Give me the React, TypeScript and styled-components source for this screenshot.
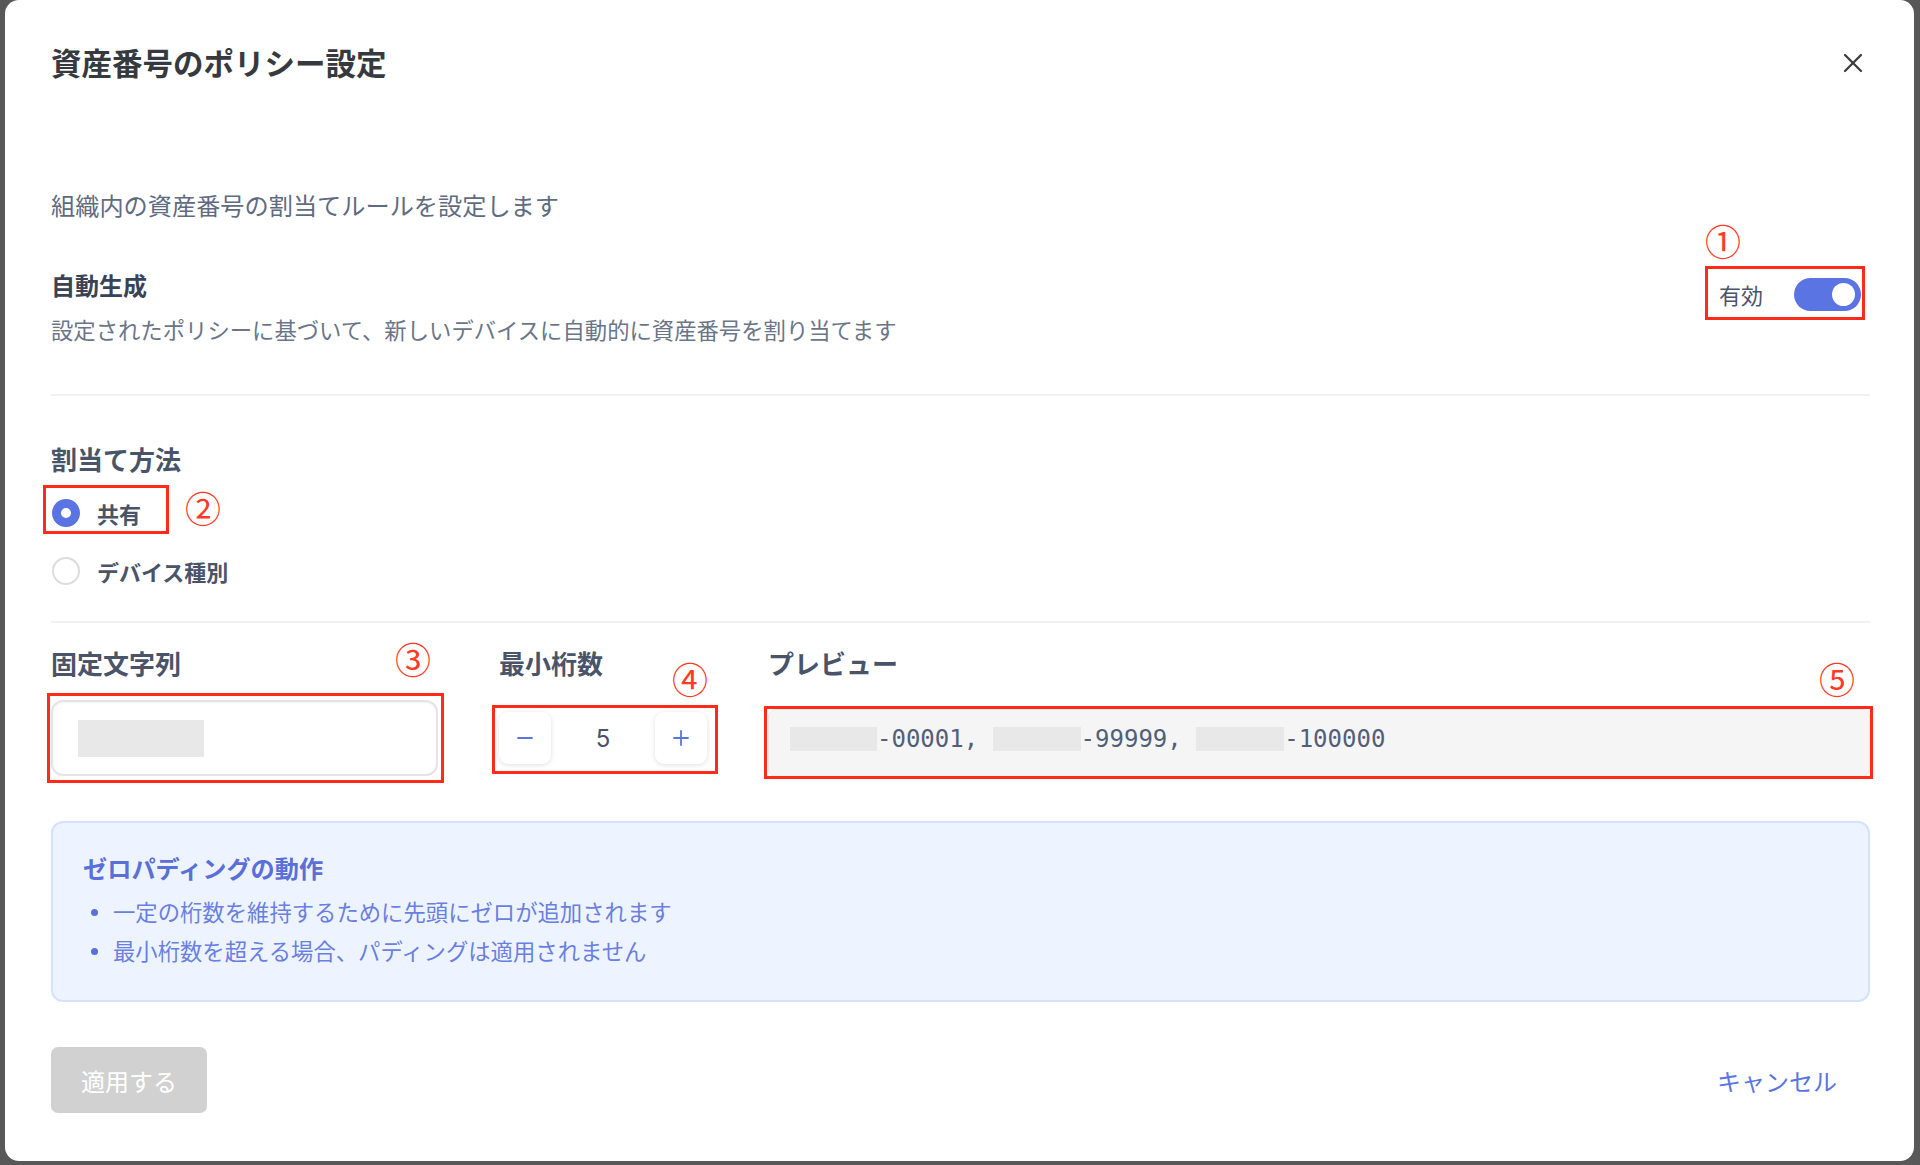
import React, { useState } from 'react'
import styled, { createGlobalStyle } from 'styled-components'
import { X, Minus, Plus } from 'lucide-react'

const GlobalStyle = createGlobalStyle`
  html, body {
    margin: 0;
    padding: 0;
    background: #585858;
  }
  body {
    font-family: "Noto Sans CJK JP", "Noto Sans", sans-serif;
  }
  #root {
    padding: 0 6px 4px 5px;
  }
`

const Modal = styled.div`
  background: #fff;
  border-radius: 14px;
  padding: 42px 44px 46px 46px;
  box-sizing: border-box;
  min-height: 1161px;
`

const Header = styled.div`
  display: flex;
  justify-content: space-between;
  align-items: center;
  height: 40px;
`

const Title = styled.h2`
  margin: 0;
  font-size: 30.5px;
  line-height: 40px;
  font-weight: 700;
  color: #363a40;
`

const CloseButton = styled.button`
  width: 44px;
  height: 44px;
  margin: 2px -5px 0 0;
  padding: 0;
  border: none;
  background: none;
  color: #3c3c3c;
  display: flex;
  align-items: center;
  justify-content: center;
  cursor: pointer;
`

const Description = styled.p`
  margin: 105px 0 0;
  font-size: 24.2px;
  line-height: 36px;
  color: #5f6b80;
`

const SettingRow = styled.div`
  margin-top: 45px;
  display: flex;
  justify-content: space-between;
  align-items: flex-start;
`

const SettingTitle = styled.div`
  font-size: 24px;
  line-height: 34px;
  font-weight: 700;
  color: #3a4356;
`

const SettingHint = styled.div`
  margin-top: 11px;
  font-size: 22.35px;
  line-height: 32px;
  color: #6b7588;
`

const ToggleSlot = styled.div`
  margin: 9px 9px 0 0;
`

const ToggleGroup = styled.label`
  display: flex;
  align-items: center;
  gap: 31px;
  height: 34px;
  font-size: 22px;
  color: #4a5468;
  cursor: pointer;
`

const Track = styled.span<{ $on: boolean }>`
  position: relative;
  width: 67px;
  height: 33px;
  border-radius: 17px;
  background: ${p => (p.$on ? '#5b74e3' : '#cfd3da')};
`

const Knob = styled.span<{ $on: boolean }>`
  position: absolute;
  top: 5px;
  left: ${p => (p.$on ? '38px' : '5px')};
  width: 23px;
  height: 23px;
  border-radius: 50%;
  background: #fff;
`

const Divider = styled.hr<{ $gap: number }>`
  margin: ${p => p.$gap}px 0 0;
  border: none;
  height: 2px;
  background: #f1f1f1;
`

const SectionTitle = styled.div<{ $gap: number }>`
  margin-top: ${p => p.$gap}px;
  font-size: 26px;
  line-height: 34px;
  font-weight: 700;
  color: #4a5468;
`

const RadioList = styled.div`
  margin-top: 17px;
  display: flex;
  flex-direction: column;
  align-items: flex-start;
  gap: 18px;
`

const RadioRow = styled.label`
  display: inline-flex;
  align-items: center;
  gap: 17px;
  height: 40px;
  padding-left: 1px;
  font-size: 22px;
  font-weight: 700;
  color: #4a5468;
  cursor: pointer;
`

const RadioDot = styled.span<{ $checked: boolean }>`
  box-sizing: border-box;
  width: 28px;
  height: 28px;
  border-radius: 50%;
  background: #fff;
  border: ${p => (p.$checked ? '9px solid #5b74e3' : '2px solid #dcdcdc')};
`

const FieldGrid = styled.div`
  margin-top: 23px;
  display: grid;
  grid-template-columns: 387px 208px 1fr;
  column-gap: 61px;
`

const FieldLabel = styled.div`
  font-size: 26px;
  line-height: 34px;
  font-weight: 700;
  color: #4a5468;
`

const Control = styled.div<{ $gap: number }>`
  margin-top: ${p => p.$gap}px;
`

const TextInput = styled.div`
  box-sizing: border-box;
  height: 76px;
  border: 2px solid #e4e4e4;
  border-radius: 12px;
  box-shadow: inset 0 1px 2px rgba(0, 0, 0, 0.05);
  display: flex;
  align-items: center;
  padding-left: 25px;
`

const Redacted = styled.span<{ $w: number; $h: number }>`
  display: inline-block;
  width: ${p => p.$w}px;
  height: ${p => p.$h}px;
  background: #e8e8e8;
  vertical-align: middle;
`

const Stepper = styled.div`
  height: 76px;
  display: flex;
  align-items: center;
  justify-content: space-between;
`

const StepButton = styled.button`
  width: 52px;
  height: 52px;
  padding: 0;
  border: none;
  border-radius: 9px;
  background: #fff;
  box-shadow: 0 1px 5px rgba(0, 0, 0, 0.13);
  color: #5b74e3;
  display: flex;
  align-items: center;
  justify-content: center;
  cursor: pointer;
`

const StepValue = styled.span`
  font-family: "Inter", "Noto Sans", sans-serif;
  font-size: 24px;
  color: #4a5468;
`

const Preview = styled.div`
  box-sizing: border-box;
  height: 68px;
  border: 1px solid #ececec;
  border-radius: 8px;
  background: #f5f5f5;
  display: flex;
  align-items: center;
  padding: 0 0 8px 21px;
  font-family: "DejaVu Sans Mono", "Liberation Mono", monospace;
  font-size: 24px;
  color: #535f7a;
  white-space: pre;
`

const InfoBox = styled.div`
  margin-top: 44px;
  box-sizing: border-box;
  height: 181px;
  border: 2px solid #d3e3fc;
  border-radius: 12px;
  background: #eef4ff;
  padding: 28px 30px 28px;
`

const InfoTitle = styled.div`
  font-size: 24.2px;
  line-height: 34px;
  font-weight: 700;
  color: #5b6fd9;
`

const InfoList = styled.ul`
  margin: 7px 0 0;
  padding: 0;
  list-style: none;
`

const InfoItem = styled.li`
  position: relative;
  padding-left: 30px;
  font-size: 22.35px;
  line-height: 39px;
  color: #6a7fe2;

  &::before {
    content: '';
    position: absolute;
    left: 8px;
    top: 17px;
    width: 7px;
    height: 7px;
    border-radius: 50%;
    background: #5b6fd9;
  }
`

const Footer = styled.div`
  margin-top: 45px;
  display: flex;
  justify-content: space-between;
  align-items: center;
`

const ApplyButton = styled.button`
  width: 156px;
  height: 66px;
  border: none;
  border-radius: 7px;
  background: #d1d1d1;
  color: #fff;
  font-family: inherit;
  font-size: 24px;
`

const CancelButton = styled.button`
  height: 66px;
  padding: 0 33px 0 20px;
  border: none;
  background: none;
  color: #5b74e3;
  font-family: inherit;
  font-size: 24px;
  cursor: pointer;
`

/* red review annotations drawn over the form */
const Annotated = styled.div<{ $inline?: boolean }>`
  position: relative;
  display: ${p => (p.$inline ? 'inline-block' : 'block')};
`

const RedFrame = styled.span<{ $t: number; $r: number; $b: number; $l: number }>`
  position: absolute;
  top: ${p => p.$t}px;
  right: ${p => p.$r}px;
  bottom: ${p => p.$b}px;
  left: ${p => p.$l}px;
  border: 3px solid #ff2a17;
  pointer-events: none;
`

const Marker = styled.span<{ $x: number; $y: number }>`
  position: absolute;
  left: ${p => p.$x}px;
  top: ${p => p.$y}px;
  transform: translate(-50%, -50%);
  font-family: "Noto Sans CJK JP", sans-serif;
  font-size: 36px;
  font-weight: 400;
  line-height: 1;
  color: #ff3a26;
  text-shadow: 0 0 3px #fff;
  pointer-events: none;
`

type Frame = { t: number; r: number; b: number; l: number }

const Note: React.FC<{
  frame: Frame
  mark: string
  x: number
  y: number
  inline?: boolean
  children: React.ReactNode
}> = ({ frame, mark, x, y, inline, children }) => (
  <Annotated $inline={inline}>
    {children}
    <RedFrame $t={frame.t} $r={frame.r} $b={frame.b} $l={frame.l} />
    <Marker $x={x} $y={y}>{mark}</Marker>
  </Annotated>
)

export default function App() {
  const [enabled, setEnabled] = useState(true)
  const [method, setMethod] = useState<'shared' | 'type'>('shared')
  const [digits, setDigits] = useState(5)

  return (
    <>
      <GlobalStyle />
      <Modal>
        <Header>
          <Title>資産番号のポリシー設定</Title>
          <CloseButton aria-label="close">
            <X size={32} strokeWidth={1.7} />
          </CloseButton>
        </Header>

        <Description>組織内の資産番号の割当てルールを設定します</Description>

        <SettingRow>
          <div>
            <SettingTitle>自動生成</SettingTitle>
            <SettingHint>設定されたポリシーに基づいて、新しいデバイスに自動的に資産番号を割り当てます</SettingHint>
          </div>
          <ToggleSlot>
            <Note frame={{ t: -11, r: -4, b: -9, l: -14 }} mark="①" x={4} y={-37}>
              <ToggleGroup onClick={() => setEnabled(!enabled)}>
                有効
                <Track $on={enabled}>
                  <Knob $on={enabled} />
                </Track>
              </ToggleGroup>
            </Note>
          </ToggleSlot>
        </SettingRow>

        <Divider $gap={49} />

        <SectionTitle $gap={46}>割当て方法</SectionTitle>
        <RadioList>
          <Note frame={{ t: -8, r: -28, b: -1, l: -8 }} mark="②" x={152} y={14} inline>
            <RadioRow onClick={() => setMethod('shared')}>
              <RadioDot $checked={method === 'shared'} />
              共有
            </RadioRow>
          </Note>
          <RadioRow onClick={() => setMethod('type')}>
            <RadioDot $checked={method === 'type'} />
            デバイス種別
          </RadioRow>
        </RadioList>

        <Divider $gap={30} />

        <FieldGrid>
          <div>
            <FieldLabel>固定文字列</FieldLabel>
            <Control $gap={20}>
              <Note frame={{ t: -7, r: -6, b: -7, l: -4 }} mark="③" x={362} y={-42}>
                <TextInput>
                  <Redacted $w={126} $h={37} />
                </TextInput>
              </Note>
            </Control>
          </div>
          <div>
            <FieldLabel>最小桁数</FieldLabel>
            <Control $gap={20}>
              <Note frame={{ t: 5, r: -11, b: 2, l: -7 }} mark="④" x={191} y={-22}>
                <Stepper>
                  <StepButton onClick={() => setDigits(Math.max(1, digits - 1))}>
                    <Minus size={24} strokeWidth={1.8} />
                  </StepButton>
                  <StepValue>{digits}</StepValue>
                  <StepButton onClick={() => setDigits(digits + 1)}>
                    <Plus size={24} strokeWidth={1.8} />
                  </StepButton>
                </Stepper>
              </Note>
            </Control>
          </div>
          <div>
            <FieldLabel>プレビュー</FieldLabel>
            <Control $gap={29}>
              <Note frame={{ t: -3, r: -3, b: -2, l: -4 }} mark="⑤" x={1069} y={-31}>
                <Preview>
                  <Redacted $w={87} $h={24} />
                  {'-00001, '}
                  <Redacted $w={88} $h={24} />
                  {'-99999, '}
                  <Redacted $w={88} $h={24} />
                  {'-100000'}
                </Preview>
              </Note>
            </Control>
          </div>
        </FieldGrid>

        <InfoBox>
          <InfoTitle>ゼロパディングの動作</InfoTitle>
          <InfoList>
            <InfoItem>一定の桁数を維持するために先頭にゼロが追加されます</InfoItem>
            <InfoItem>最小桁数を超える場合、パディングは適用されません</InfoItem>
          </InfoList>
        </InfoBox>

        <Footer>
          <ApplyButton disabled>適用する</ApplyButton>
          <CancelButton>キャンセル</CancelButton>
        </Footer>
      </Modal>
    </>
  )
}
